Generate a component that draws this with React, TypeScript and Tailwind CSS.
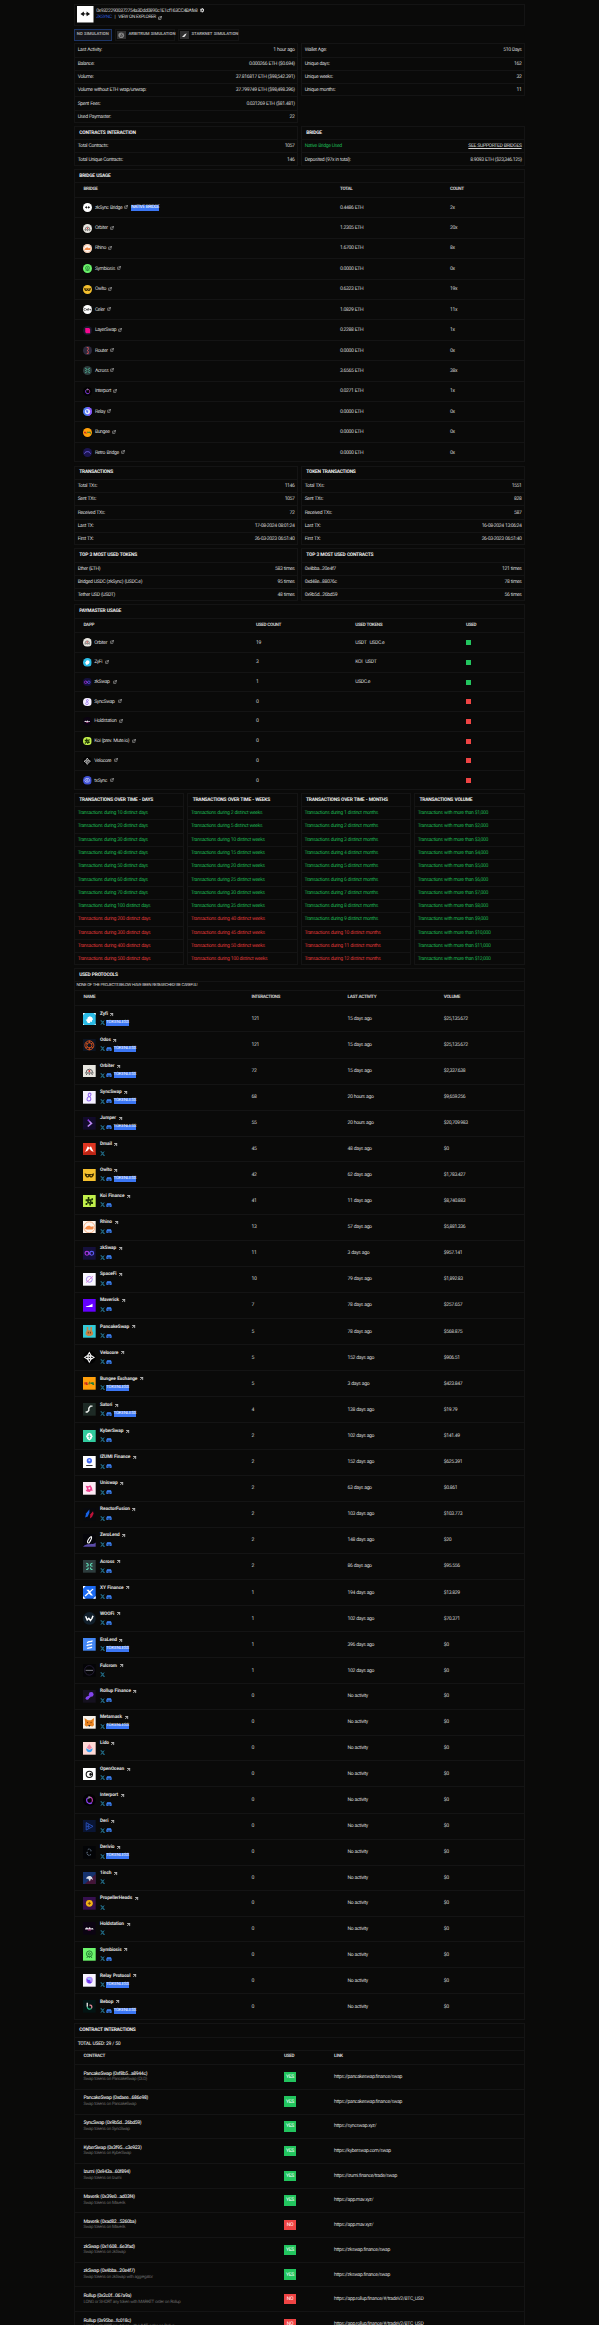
import type { ReactNode } from "react";
import { FaDiscord, FaGear, FaXTwitter } from "react-icons/fa6";
import { FiArrowUpRight, FiExternalLink } from "react-icons/fi";

const logos: Record<string, { bg: string; art: ReactNode }> = {
  zksync: { bg: "#ffffff", art: <g fill="#111"><path d="M5 11.500l5-3.500v2.500h1.500v2H10V15z" /><path d="M19 11.500L14 8v2.500h-1.500v2H14V15z" /></g> },
  orbiter: { bg: "#e8e6e0", art: <g fill="none" stroke="#555" strokeWidth="1.800"><path d="M6 14a6 6 0 0 1 12 0M4 15h16M6 19l2-3M12 19v-3M18 19l-2-3" /><circle cx="12" cy="11.500" r="2" fill="#c33" stroke="none" /></g> },
  rhino: { bg: "#fff4ec", art: <g><circle cx="12" cy="12" r="10.500" fill="none" stroke="#f7a672" strokeWidth="1.600" /><path d="M4 15c1-5 6-6 9-6l2 2 5-1v4l-2 2H8z" fill="#f58a45" /></g> },
  symbiosis: { bg: "#6cf56c", art: <g fill="none" stroke="#1b6e2b" strokeWidth="1.600"><circle cx="12" cy="11" r="5.500" /><circle cx="12" cy="11" r="2" /><path d="M7 19l3-4M17 19l-3-4M12 16v3" /></g> },
  owlto: { bg: "#f5c02e", art: <g fill="#3a2a00"><path d="M3 8l4 1.500h10L21 8l-1 5-3 3h-3l-2-2-2 2H7l-3-3z" /><circle cx="8.500" cy="12.300" r="1.400" fill="#f5c02e" /><circle cx="15.500" cy="12.300" r="1.400" fill="#f5c02e" /></g> },
  celer: { bg: "#ffffff", art: <g fill="none" stroke="#333" strokeWidth="1.800"><path d="M7 9.500a3 3 0 1 0 0 5M9 12h4a2 2 0 1 0-.6 2M15 8v7M17 12h4M21 10v5" /></g> },
  layerswap: { bg: "#171a2b", art: <path d="M6 5h10l3 3v11H8l-2-3z" fill="#f5088e" /> },
  router: { bg: "#2d2a3e", art: <path d="M10 4h4M14 4v6l-3 2 3 2v6h-4" fill="none" stroke="#e35757" strokeWidth="2.200" /> },
  across: { bg: "#2d3c3d", art: <g fill="none" stroke="#5fd9b4" strokeWidth="2"><path d="M6 6c4 0 4 4 4 4s-1 2-4 2M18 6c-4 0-4 4-4 4s1 2 4 2M6 18c4 0 4-4 4-4M18 18c-4 0-4-4-4-4" /></g> },
  interport: { bg: "#020203", art: <g fill="none" strokeWidth="2.400"><path d="M9 7a6 6 0 0 0-2 6c0 4 6 7 10 3" stroke="#8a3ff0" /><path d="M13 6c4 0 6 5 4 9" stroke="#b33a9f" /><path d="M11 9V5l3 2" stroke="#e8e0ff" strokeWidth="1.500" /></g> },
  relay: { bg: "#4c7af0", art: <g><path d="M12 0h12v24H14z" fill="#8a55f7" /><circle cx="12" cy="12" r="7" fill="#dfe7ff" /><path d="M8 8l6 2-1 6-4-2z" fill="#5a73f2" /></g> },
  relay2: { bg: "#f8f4ff", art: <g><circle cx="12" cy="11.500" r="6.500" fill="#b48af8" /><path d="M7 10h6v4l4 1-3 3-5-1z" fill="#6a35ee" /><path d="M9 8h6v3H9z" fill="#8fd0fb" /></g> },
  bungee: { bg: "#ff9f0a", art: <g fill="none" strokeWidth="2.600"><path d="M4 10v4M7 10v4h2" stroke="#c8261f" /><path d="M11 14l2-5" stroke="#6b7a20" /><path d="M14 12h3v-2M19 10v4h2" stroke="#1c7b3b" /></g> },
  retro: { bg: "#1b1450", art: <path d="M4 15c2-7 14-7 16 0" fill="none" stroke="#7a6cf0" strokeWidth="2.400" /> },
  zyfi: { bg: "#2cbce6", art: <g><path d="M0 0h4L0 4zM24 0h-4l4 4zM0 24h4l-4-4zM24 24h-4l4-4z" fill="#fff" /><path d="M7 15l-2-2 3-1 1-4 4-2 4 2 2 4-2 2v3l-3-1-1 3h-4z" fill="#fff" /></g> },
  zkswap: { bg: "#15103d", art: <g fill="none" strokeWidth="2.200"><circle cx="7.500" cy="12" r="3.600" stroke="#a431d6" /><circle cx="16.500" cy="12" r="3.600" stroke="#5a5af0" /><path d="M10 9.500l4 5" stroke="#8a45e6" /></g> },
  syncswap: { bg: "#f5f0ff", art: <g fill="none" stroke="#9268f0" strokeWidth="2"><path d="M13 4c-4 0-4 6-1 7 4 1 4 8-1 8s-4-7 0-8c5-1 5-7 2-7" /></g> },
  holdstation: { bg: "#0b0312", art: <g><path d="M4 13c2-4 5-3 6 0 1-4 4-4 5 0 2-3 4-2 5 1H4z" fill="#e6dfe9" /><path d="M9 14h6v2H9z" fill="#c34a8f" /></g> },
  koi: { bg: "#c2f04b", art: <g fill="#1d3404"><path d="M9 4h3v4h4V6h3v4h-3v3h3v4h-4v3h-3v-4H8v3H5v-4h3v-3H5V8h4z" /><rect x="11" y="11" width="2" height="2" fill="#c2f04b" /></g> },
  velocore: { bg: "#020202", art: <g fill="none" stroke="#f5f5f5" strokeWidth="2"><path d="M12 3l3 5-3 2-3-2zM12 21l3-5-3-2-3 2zM3 12l5-3 2 3-2 3zM21 12l-5-3-2 3 2 3z" /></g> },
  txsync: { bg: "#4052d6", art: <g fill="none" stroke="#dbe0ff" strokeWidth="1.800"><path d="M5 12l3-5h8l3 5-3 5H8z" /><circle cx="12" cy="12" r="2" /></g> },
  odos: { bg: "#0b1422", art: <g fill="none" stroke="#d9541e" strokeWidth="1.700"><circle cx="12" cy="12" r="8.500" /><circle cx="12" cy="12" r="5" /><path d="M12 3v5M5 7l4 3M19 7l-4 3M5 17l4-3M19 17l-4-3M12 21v-6" /></g> },
  jumper: { bg: "#120b2b", art: <g fill="none" strokeWidth="3"><path d="M9 5l3 3" stroke="#8b2fe0" /><path d="M12 8l4 4-7 6" stroke="#bd8af5" /></g> },
  dmail: { bg: "#df3521", art: <g><path d="M4 17l5-11 3 3 3-3 5 11-5-3-3-4-3 4z" fill="#fff" /><path d="M0 19l9-3 3-3 3 3 9 3v5H0z" fill="#bd2515" /></g> },
  spacefi: { bg: "#faf8ff", art: <g fill="none" stroke="#a184ef" strokeWidth="1.800"><circle cx="12" cy="12" r="5.500" /><path d="M6 18L19 6" stroke="#e07cdb" /></g> },
  maverick: { bg: "#6400ff", art: <path d="M5 14l6-1 7-4v6H6z" fill="#fff" /> },
  pancake: { bg: "#33c9d6", art: <g fill="#c98447"><path d="M7 4h3v6h4V4h3v7l2 3v4l-4 3H9l-4-3v-4l2-3z" /><path d="M9 13h2v3H9zM13 13h2v3h-2z" fill="#6d3d17" /></g> },
  satori: { bg: "#1d2a25", art: <path d="M18 6h-4l-3 4v4l-3 3H5" fill="none" stroke="#f2f5f2" strokeWidth="2.600" /> },
  kyber: { bg: "#31cb9e", art: <g><path d="M8 7l4-2 4 2 2 5-2 5-4 3-4-3-2-5z" fill="#fff" /><path d="M12 8v9M9 12h6" stroke="#31cb9e" strokeWidth="1.500" /></g> },
  izumi: { bg: "#ffffff", art: <g><circle cx="12" cy="9" r="5" fill="#3f67f2" /><circle cx="12" cy="8" r="2" fill="#cfdcff" /><path d="M6 18h12" stroke="#333" strokeWidth="2" /></g> },
  uniswap: { bg: "#fdeaf4", art: <g fill="#f0408f"><path d="M5 7l5 1 4-2 3 5 1 6-3-1-2 3-6-1-2-3 3-1z" /><circle cx="12" cy="12" r="2" fill="#fdeaf4" /></g> },
  reactor: { bg: "#08090d", art: <g><path d="M12 3L6 10l-2 8 5-2 3-7z" fill="#1763e8" /><path d="M19 6l-5 6-1 8 4-3 3-6z" fill="#c01338" /></g> },
  zerolend: { bg: "#050509", art: <g><path d="M0 24c6-8 18-2 24-8v8z" fill="#5b4ba8" /><path d="M9 16c-2-1 3-10 6-11 3 0 0 7-3 11-1 2-3 1-3 0z" fill="none" stroke="#fff" strokeWidth="2" /></g> },
  xy: { bg: "#1b6af3", art: <g><path d="M0 0h5L0 5zM24 24h-5l5-5zM0 24v-5l5 5z" fill="#fff" /><path d="M3 18L18 5l2 1-6 6 5 6h-4l-4-4-6 6zM6 7h5l2 3-2 2z" fill="#fff" /></g> },
  woofi: { bg: "#111f2b", art: <path d="M5 8l3 7 3-3 3 4 3-4 2-5" fill="none" stroke="#fff" strokeWidth="2.800" /> },
  eralend: { bg: "#4286f5", art: <g fill="none" stroke="#fff" strokeWidth="2.400"><path d="M18 5c-3 4-7 0-10 4M17 11c-3 4-7 0-10 4M17 17c-3 3-6 0-9 3" /></g> },
  fulcrom: { bg: "#040406", art: <g fill="none"><circle cx="12" cy="12" r="9" stroke="#2e2442" strokeWidth="1.400" /><path d="M5 12h14" stroke="#8c8c9a" strokeWidth="1.700" /></g> },
  rollup: { bg: "#15111f", art: <g fill="#8344ee"><circle cx="15.500" cy="8.500" r="4.500" /><circle cx="8" cy="15.500" r="3" /><path d="M8 12l5-2 2 3-5 4z" /></g> },
  metamask: { bg: "#f6f1ea", art: <g><path d="M3 4l6 4h6l6-4-1 9 1 4-3 3-4-1h-4l-4 1-3-3 1-4z" fill="#e8821e" /><path d="M10 17h4l-1 3h-2z" fill="#2a2a2a" /><path d="M7 11l3 1-1 2zM17 11l-3 1 1 2z" fill="#6b3410" /></g> },
  lido: { bg: "#ffd9d6", art: <g><path d="M12 4l5 7-5 3-5-3z" fill="#f08ba8" /><path d="M6 12l6 3 6-3c1 10-13 10-12 0z" fill="#3aa2f5" /></g> },
  openocean: { bg: "#ffffff", art: <g fill="none" stroke="#111" strokeWidth="2"><circle cx="12" cy="12" r="6" /><path d="M14 9c-3 1-3 5 0 6l4-3z" fill="#111" strokeWidth="0" /></g> },
  deri: { bg: "#0a1533", art: <path d="M6 5l13 7-13 7zM6 12h7M10 8v8" fill="none" stroke="#2a52be" strokeWidth="1.700" /> },
  derivio: { bg: "#030406", art: <path d="M9 7c3-3 7 0 6 3M8 11c-2 5 3 9 7 5" fill="none" stroke="#6f8297" strokeWidth="1.800" strokeDasharray="2.500 1" /> },
  inch: { bg: "#15326e", art: <g><path d="M24 4v20H2z" fill="#431537" /><path d="M6 13c1-6 8-7 11-3l2 5-4-2-2 5-3-5z" fill="#d8dce6" /></g> },
  propeller: { bg: "#36104f", art: <g><circle cx="12" cy="12" r="6.500" fill="#f3b515" /><path d="M12 9v6M9 12h6" stroke="#6d3a10" strokeWidth="1.600" /></g> },
  bebop: { bg: "#031413", art: <g fill="none" strokeWidth="2.300"><path d="M8 5v8" stroke="#fff" /><path d="M8 13c1 5 5 5 8 3" stroke="#2fc08d" /><path d="M12 10c4-2 6 3 4 6" stroke="#e88a9b" /></g> },
};

const roundInSquare = new Set(["velocore", "interport", "woofi"]);

function Logo({ id, cls }: { id: string; cls: string }) {
  const l = logos[id];
  return (
    <svg viewBox="0 0 24 24" className={"block shrink-0 " + cls}>
      <rect width="24" height="24" fill={l.bg} />
      {l.art}
    </svg>
  );
}

const box = "ring-1 ring-inset ring-[#141414]";
const line = "border-t border-[#141414]";
const headRow = "flex items-center pl-[9.5px] text-[4.7px] font-bold tracking-[-0.08em] text-[#cfcfcf]";

function Title({ children }: { children: ReactNode }) {
  return <div className="flex h-[13.3px] shrink-0 items-center pl-[5.3px] pt-[0.5px] text-[4.9px] font-bold tracking-[-0.05em] text-[#f0f0f0]">{children}</div>;
}

type Pair = [ReactNode, ReactNode];

function List({ title, rows }: { title?: string; rows: Pair[] }) {
  return (
    <div className={`${box} w-[223.6px]`}>
      {title && <Title>{title}</Title>}
      {rows.map(([a, b], i) => (
        <div key={i} className={`flex h-[13.3px] items-center justify-between pl-[3.7px] pr-[3px] ${title || i ? line : "pt-[0.5px]"}`}>
          <span>{a}</span>
          <span>{b}</span>
        </div>
      ))}
    </div>
  );
}

const bridges: [string, string, string, string][] = [
  ["zksync", "zkSync Bridge", "0.4486 ETH", "2x"],
  ["orbiter", "Orbiter", "1.2305 ETH", "20x"],
  ["rhino", "Rhino", "1.6700 ETH", "8x"],
  ["symbiosis", "Symbiosis", "0.0000 ETH", "0x"],
  ["owlto", "Owlto", "0.6323 ETH", "19x"],
  ["celer", "Celer", "1.0829 ETH", "11x"],
  ["layerswap", "LayerSwap", "0.2288 ETH", "1x"],
  ["router", "Router", "0.0000 ETH", "0x"],
  ["across", "Across", "3.6565 ETH", "38x"],
  ["interport", "Interport", "0.0271 ETH", "1x"],
  ["relay", "Relay", "0.0000 ETH", "0x"],
  ["bungee", "Bungee", "0.0000 ETH", "0x"],
  ["retro", "Retro Bridge", "0.0000 ETH", "0x"],
];

const paymasters: [string, string, string, string[]][] = [
  ["orbiter", "Orbiter", "19", ["USDT", "USDC.e"]],
  ["zyfi", "ZyFi", "3", ["KOI", "USDT"]],
  ["zkswap", "zkSwap", "1", ["USDC.e"]],
  ["syncswap", "SyncSwap", "0", []],
  ["holdstation", "Holdstation", "0", []],
  ["koi", "Koi (prev. Mute.io)", "0", []],
  ["velocore", "Velocore", "0", []],
  ["txsync", "txSync", "0", []],
];

const goals: { title: string; items: string[]; done: number }[] = [
  { title: "TRANSACTIONS OVER TIME - DAYS", done: 8, items: [10, 20, 30, 40, 50, 60, 70, 100, 200, 300, 400, 500].map((n) => `Transactions during ${n} distinct days`) },
  { title: "TRANSACTIONS OVER TIME - WEEKS", done: 8, items: [2, 5, 10, 15, 20, 25, 30, 35, 40, 45, 50, 100].map((n) => `Transactions during ${n} distinct weeks`) },
  { title: "TRANSACTIONS OVER TIME - MONTHS", done: 9, items: [1, 2, 3, 4, 5, 6, 7, 8, 9, 10, 11, 12].map((n) => `Transactions during ${n} distinct months`) },
  { title: "TRANSACTIONS VOLUME", done: 12, items: [1, 2, 3, 4, 5, 6, 7, 8, 9, 10, 11, 12].map((n) => `Transactions with more than $${n},000`) },
];

// id, name, links (x = X, d = Discord, t = tokenless), interactions, last activity, volume
const protocols: [string, string, string, string, string, string][] = [
  ["zyfi", "Zyfi", "xt", "121", "15 days ago", "$25,135.672"],
  ["odos", "Odos", "xdt", "121", "15 days ago", "$25,135.672"],
  ["orbiter", "Orbiter", "xdt", "72", "15 days ago", "$2,337.638"],
  ["syncswap", "SyncSwap", "xdt", "68", "20 hours ago", "$9,659.256"],
  ["jumper", "Jumper", "xdt", "55", "20 hours ago", "$20,709.983"],
  ["dmail", "Dmail", "x", "45", "48 days ago", "$0"],
  ["owlto", "Owlto", "xdt", "42", "62 days ago", "$1,783.427"],
  ["koi", "Koi Finance", "xd", "41", "11 days ago", "$8,740.883"],
  ["rhino", "Rhino", "xd", "13", "57 days ago", "$5,881.336"],
  ["zkswap", "zkSwap", "xd", "11", "3 days ago", "$957.141"],
  ["spacefi", "SpaceFi", "xd", "10", "79 days ago", "$1,892.83"],
  ["maverick", "Maverick", "xd", "7", "78 days ago", "$257.657"],
  ["pancake", "PancakeSwap", "xd", "5", "78 days ago", "$568.875"],
  ["velocore", "Velocore", "xd", "5", "152 days ago", "$906.51"],
  ["bungee", "Bungee Exchange", "xt", "5", "3 days ago", "$423.847"],
  ["satori", "Satori", "xdt", "4", "138 days ago", "$19.79"],
  ["kyber", "KyberSwap", "xd", "2", "102 days ago", "$141.49"],
  ["izumi", "IZUMI Finance", "xd", "2", "152 days ago", "$625.391"],
  ["uniswap", "Uniswap", "xd", "2", "63 days ago", "$0.861"],
  ["reactor", "ReactorFusion", "xd", "2", "103 days ago", "$103.773"],
  ["zerolend", "ZeroLend", "xd", "2", "148 days ago", "$20"],
  ["across", "Across", "xd", "2", "86 days ago", "$95.556"],
  ["xy", "XY Finance", "xd", "1", "194 days ago", "$13.829"],
  ["woofi", "WOOFi", "xd", "1", "102 days ago", "$70.371"],
  ["eralend", "EraLend", "xt", "1", "396 days ago", "$0"],
  ["fulcrom", "Fulcrom", "x", "1", "102 days ago", "$0"],
  ["rollup", "Rollup Finance", "xd", "0", "No activity", "$0"],
  ["metamask", "Metamask", "xt", "0", "No activity", "$0"],
  ["lido", "Lido", "x", "0", "No activity", "$0"],
  ["openocean", "OpenOcean", "xd", "0", "No activity", "$0"],
  ["interport", "Interport", "xd", "0", "No activity", "$0"],
  ["deri", "Deri", "xd", "0", "No activity", "$0"],
  ["derivio", "Derivio", "xt", "0", "No activity", "$0"],
  ["inch", "1inch", "x", "0", "No activity", "$0"],
  ["propeller", "PropellerHeads", "x", "0", "No activity", "$0"],
  ["holdstation", "Holdstation", "x", "0", "No activity", "$0"],
  ["symbiosis", "Symbiosis", "xd", "0", "No activity", "$0"],
  ["relay2", "Relay Protocol", "xt", "0", "No activity", "$0"],
  ["bebop", "Bebop", "xdt", "0", "No activity", "$0"],
];

const contracts: [string, string, boolean, string][] = [
  ["PancakeSwap (0xf8b5...a8944c)", "Swap tokens on PancakeSwap (OLD)", true, "https://pancakeswap.finance/swap"],
  ["PancakeSwap (0xdaee...686e98)", "Swap tokens on PancakeSwap", true, "https://pancakeswap.finance/swap"],
  ["SyncSwap (0x9b5d...26bd59)", "Swap tokens on SyncSwap", true, "https://syncswap.xyz/"],
  ["KyberSwap (0x3f95...c3e923)", "Swap tokens on KyberSwap", true, "https://kyberswap.com/swap"],
  ["Izumi (0x943a...60f894)", "Swap tokens on Izumi", true, "https://izumi.finance/trade/swap"],
  ["Maverik (0x39e0...ad03f4)", "Swap tokens on Maverik", true, "https://app.mav.xyz/"],
  ["Maverik (0xad82...5260ba)", "Swap tokens on Maverik", false, "https://app.mav.xyz/"],
  ["zkSwap (0x1608...6e3fad)", "Swap tokens on zkSwap", true, "https://zkswap.finance/swap"],
  ["zkSwap (0x4bba...20e4f7)", "Swap tokens on zkSwap with aggregator", true, "https://zkswap.finance/swap"],
  ["Rollup (0x2c0f...067a9a)", "LONG or SHORT any token with MARKET order on Rollup", false, "https://app.rollup.finance/#/tradeV2/BTC_USD"],
  ["Rollup (0x95be...fc018c)", "LONG or SHORT any token with LIMIT order on Rollup", false, "https://app.rollup.finance/#/tradeV2/BTC_USD"],
];

export default function App() {
  return (
    <div className="h-[2325px] w-full overflow-hidden bg-[#0a0a09] font-[Roboto,sans-serif] text-[5.1px] leading-[6px] tracking-[-0.073em] [word-spacing:0.08em] text-[#d4d4d4] [text-rendering:geometricPrecision] whitespace-nowrap">
      <div className="ml-[74px] flex w-[450.6px] flex-col pt-[3.5px]">
        <header className={`${box} flex h-[22px] items-center pl-[3px]`}>
          <Logo id="zksync" cls="size-[16.5px]" />
          <div className="ml-[2.7px] flex flex-col gap-[1px]">
            <div className="flex items-center gap-[2.2px] text-[5px] tracking-[-0.075em]">
              0x93222900372754a3Ddd0890c1E1cf163CC4BAfe8
              <FaGear className="mb-[1px] size-[4.5px]" />
            </div>
            <div className="flex items-center text-[4.7px]">
              <span className="text-[#2b55d2]">ZKSYNC</span>
              <span className="mx-[2.9px]">|</span>
              <span>VIEW ON EXPLORER</span>
              <FiExternalLink strokeWidth={3} className="mb-[1px] ml-[1.8px] size-[4px]" />
            </div>
          </div>
        </header>

        <nav className="mt-[3px] flex h-[12.5px] gap-[3px] text-[4.3px] font-bold tracking-[-0.02em] text-[#a8a8a8]">
          <div className="flex w-[37.5px] items-center justify-center border border-[#1d3566] bg-[#14151a]">NO SIMULATION</div>
          <div className="flex w-[60px] items-center gap-[3px] border border-[#141414] pl-[1.5px]">
            <svg viewBox="0 0 24 24" className="size-[8.5px] shrink-0 bg-[#303030]"><circle cx="12" cy="12" r="8" fill="#858585" /><path d="M9 17l5-10M13 17l3-6" stroke="#303030" strokeWidth="2" /></svg>
            ARBITRUM SIMULATION
          </div>
          <div className="flex w-[61px] items-center gap-[3px] border border-[#141414] pl-[1.5px]">
            <svg viewBox="0 0 24 24" className="size-[8.5px] shrink-0 bg-[#303030]"><path d="M4 17c5 0 6-9 15-10-3 3-4 10-9 10z" fill="#eee" /></svg>
            STARKNET SIMULATION
          </div>
        </nav>

        <section className="mt-[2.3px] flex items-start justify-between">
          <List
            rows={[
              ["Last Activity:", "1 hour ago"],
              ["Balance:", "0.000266 ETH ($0.694)"],
              ["Volume:", "37.816817 ETH ($98,542.391)"],
              ["Volume without ETH wrap/unwrap:", "37.799749 ETH ($98,498.396)"],
              ["Spent Fees:", "0.031269 ETH ($81.481)"],
              ["Used Paymaster:", "22"],
            ]}
          />
          <List rows={[["Wallet Age:", "510 Days"], ["Unique days:", "162"], ["Unique weeks:", "32"], ["Unique months:", "11"]]} />
        </section>

        <section className="mt-[2.8px] flex justify-between">
          <List title="CONTRACTS INTERACTION" rows={[["Total Contracts:", "1057"], ["Total Unique Contracts:", "146"]]} />
          <List
            title="BRIDGE"
            rows={[
              [<span className="text-[#1bb04f]">Native Bridge Used</span>, <span className="underline">SEE SUPPORTED BRIDGES</span>],
              ["Deposited (97x in total):", "8.9093 ETH ($23,346.125)"],
            ]}
          />
        </section>

        <section className={`${box} mt-[3px] h-[293.6px]`}>
          <Title>BRIDGE USAGE</Title>
          <div className={`${line} ${headRow} h-[14.9px]`}>
            <span className="w-[256.5px]">BRIDGE</span>
            <span className="w-[110px]">TOTAL</span>
            <span>COUNT</span>
          </div>
          {bridges.map(([id, name, total, count]) => (
            <div key={name} className={`${line} flex h-[20.41px] items-center pl-[9.2px]`}>
              <div className="flex w-[256.8px] items-center">
                <Logo id={id} cls="size-[9px] rounded-full" />
                <span className="ml-[2.7px]">{name}</span>
                <FiExternalLink strokeWidth={2.6} className="mb-[1px] ml-[2px] size-[4px]" />
                {id === "zksync" && <span className="ml-[3px] flex h-[6px] w-[28px] items-center justify-center bg-[#3b76f3] text-[4.6px] text-white">NATIVE BRIDGE</span>}
              </div>
              <span className="w-[110px]">{total}</span>
              <span>{count}</span>
            </div>
          ))}
        </section>

        <section className="mt-[3.2px] flex justify-between">
          <List title="TRANSACTIONS" rows={[["Total TXs:", "1146"], ["Sent TXs:", "1057"], ["Received TXs:", "72"], ["Last TX:", "17-08-2024 08:01:24"], ["First TX:", "26-03-2023 06:51:40"]]} />
          <List title="TOKEN TRANSACTIONS" rows={[["Total TXs:", "1551"], ["Sent TXs:", "828"], ["Received TXs:", "587"], ["Last TX:", "16-08-2024 13:06:24"], ["First TX:", "26-03-2023 06:51:40"]]} />
        </section>

        <section className="mt-[2.9px] flex justify-between">
          <List title="TOP 3 MOST USED TOKENS" rows={[["Ether (ETH)", "583 times"], ["Bridged USDC (zkSync) (USDC.e)", "95 times"], ["Tether USD (USDT)", "48 times"]]} />
          <List title="TOP 3 MOST USED CONTRACTS" rows={[["0x4bba...20e4f7", "121 times"], ["0xd48e...88076c", "78 times"], ["0x9b5d...26bd59", "56 times"]]} />
        </section>

        <section className={`${box} mt-[3px] h-[185.8px]`}>
          <Title>PAYMASTER USAGE</Title>
          <div className={`${line} ${headRow} h-[14.7px]`}>
            <span className="w-[172.5px]">DAPP</span>
            <span className="w-[99.3px]">USED COUNT</span>
            <span className="w-[110.7px]">USED TOKENS</span>
            <span>USED</span>
          </div>
          {paymasters.map(([id, name, count, tokens]) => (
            <div key={name} className={`${line} flex h-[19.7px] items-center pl-[9.2px]`}>
              <div className="flex w-[172.8px] items-center">
                <Logo id={id} cls="size-[8.5px] rounded-full" />
                <span className="ml-[2.5px]">{name}</span>
                <FiExternalLink strokeWidth={2.6} className="mb-[1px] ml-[3px] size-[4px]" />
              </div>
              <span className="w-[99.3px]">{count}</span>
              <span className="flex w-[110.7px] gap-[3px]">{tokens.map((t) => <span key={t}>{t}</span>)}</span>
              <span className={`size-[5px] ${tokens.length ? "bg-[#22c55e]" : "bg-[#ef4444]"}`} />
            </div>
          ))}
        </section>

        <section className="mt-[2.5px] flex justify-between">
          {goals.map((g) => (
            <div key={g.title} className={`${box} w-[110.4px]`}>
              <Title>{g.title}</Title>
              {g.items.map((t, i) => (
                <div key={t} className={`${line} flex h-[13.29px] items-center pl-[3.7px] ${i < g.done ? "text-[#1bb04f]" : "text-[#de3636]"}`}>{t}</div>
              ))}
            </div>
          ))}
        </section>

        <section className={`${box} mt-[2.5px] h-[1052.5px]`}>
          <Title>USED PROTOCOLS</Title>
          <div className={`${line} flex h-[9.2px] items-center pl-[2.5px] text-[4.2px]`}>NONE OF THE PROJECTS BELOW HAVE BEEN RESEARCHED! BE CAREFUL!</div>
          <div className={`${line} ${headRow} h-[15px]`}>
            <span className="w-[168px]">NAME</span>
            <span className="w-[96px]">INTERACTIONS</span>
            <span className="w-[96.3px]">LAST ACTIVITY</span>
            <span>VOLUME</span>
          </div>
          {protocols.map(([id, name, links, count, last, volume]) => (
            <div key={name} className={`${line} flex items-center pl-[9px] ${links === "x" ? "h-[25.4px]" : "h-[26.12px]"}`}>
              <div className="flex w-[168.5px] items-center">
                <Logo id={id} cls={roundInSquare.has(id) ? "size-[12.7px] rounded-full" : "size-[12.7px]"} />
                <div className="ml-[4.3px] flex flex-col gap-[1.9px] pb-[0.4px]">
                  <div className="flex items-center text-[4.8px] font-bold tracking-[-0.02em] text-[#e0e0e0]">
                    {name}
                    <FiArrowUpRight strokeWidth={3.4} className="mb-[1.4px] ml-[1.6px] size-[5.2px]" />
                  </div>
                  <div className="flex h-[5.7px] items-center">
                    <FaXTwitter className="size-[5.2px] text-[#2c9cc6]" />
                    {links.includes("d") && <FaDiscord className="ml-[1.3px] size-[6px] text-[#3b82f6]" />}
                    {links.includes("t") && <span className="ml-[1.1px] flex h-[5.7px] w-[22.7px] items-center justify-center bg-[#3b76f3] text-[4.4px] tracking-[-0.03em] text-white">TOKENLESS</span>}
                  </div>
                </div>
              </div>
              <span className="w-[96px]">{count}</span>
              <span className="w-[96.3px]">{last}</span>
              <span>{volume}</span>
            </div>
          ))}
        </section>

        <section className={`${box} mt-[3px]`}>
          <Title>CONTRACT INTERACTIONS</Title>
          <div className={`${line} flex h-[13px] items-center pl-[3.7px] font-medium`}>TOTAL USED: 29 / 50</div>
          <div className={`${line} ${headRow} h-[14.5px]`}>
            <span className="w-[200.5px]">CONTRACT</span>
            <span className="w-[50px]">USED</span>
            <span>LINK</span>
          </div>
          {contracts.map(([name, text, used, link]) => (
            <div key={name} className={`${line} flex h-[24.69px] items-center pl-[9.5px]`}>
              <div className="flex w-[200.5px] flex-col gap-[0.6px]">
                <span className="font-medium text-[#dedede]">{name}</span>
                <span className="text-[4.5px] text-[#686868]">{text}</span>
              </div>
              <div className="w-[50px]">
                <span className={`flex h-[10.5px] w-[12px] items-center justify-center text-white ${used ? "bg-[#22c55e]" : "bg-[#ef4444]"}`}>{used ? "YES" : "NO"}</span>
              </div>
              <span>{link}</span>
            </div>
          ))}
        </section>
      </div>
    </div>
  );
}
